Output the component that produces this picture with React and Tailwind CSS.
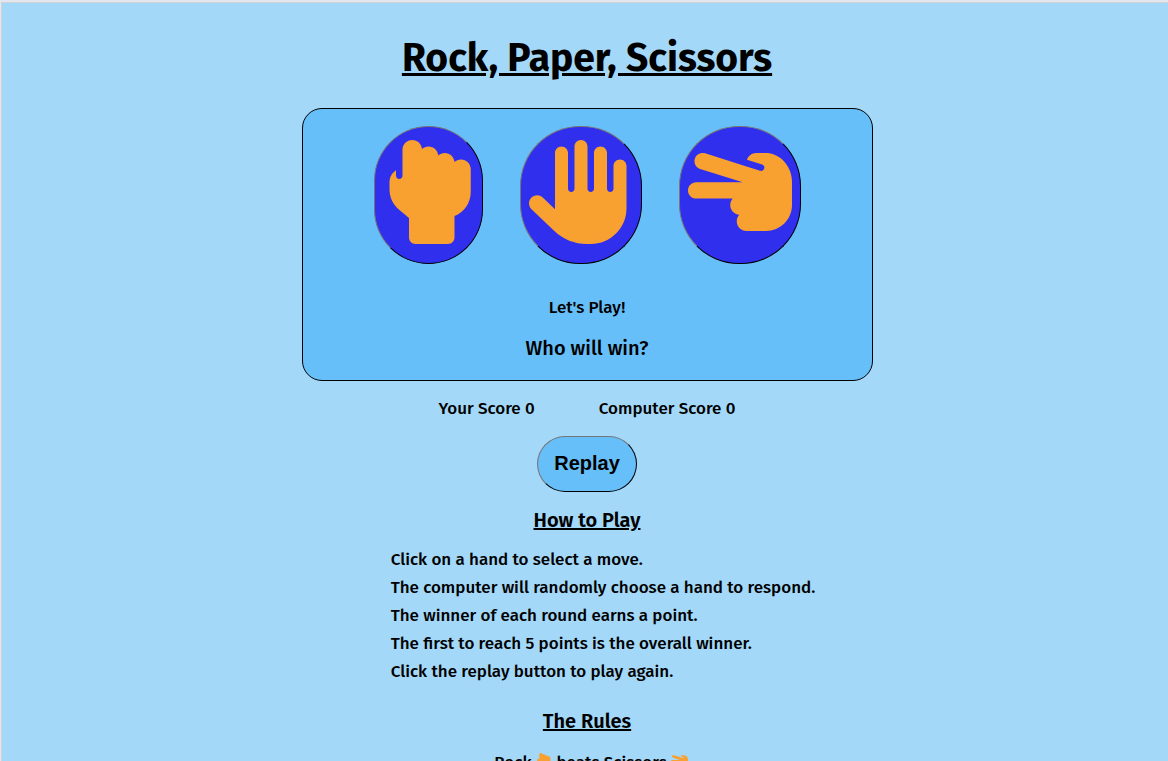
import { FaHandBackFist, FaHand, FaHandScissors } from "react-icons/fa6";

const moves = [
  { name: "Rock", Icon: FaHandBackFist, size: "w-[91px]" },
  { name: "Paper", Icon: FaHand, size: "w-[104px]" },
  { name: "Scissors", Icon: FaHandScissors, size: "w-[104px]" },
];

const steps = [
  "Click on a hand to select a move.",
  "The computer will randomly choose a hand to respond.",
  "The winner of each round earns a point.",
  "The first to reach 5 points is the overall winner.",
  "Click the replay button to play again.",
];

export default function App() {
  return (
    <div className="h-screen overflow-hidden border-t-2 border-l border-[#e3e6ec] bg-[#a3d8f8] font-['Fira_Sans','Noto_Sans',sans-serif] text-[17px] font-medium text-black">
      <main className="flex flex-col items-center border-t border-l border-[#ced2d9] pl-1">
        <h1 className="mt-7 text-[39px] leading-[54px] font-bold underline">Rock, Paper, Scissors</h1>

        <section className="mt-[23px] flex w-[571px] max-w-full flex-col items-center rounded-[20px] border border-black bg-[#67bff9] pt-[17px] pb-[18px]">
          <div className="flex gap-[37px]">
            {moves.map(({ name, Icon, size }) => (
              <button
                key={name}
                aria-label={name}
                className="rounded-[60px] border border-[#222222] bg-[#312fee] px-2 pt-[13px] pb-[19px] text-[#f9a130] [border-style:outset]"
              >
                <Icon className={`h-[104px] ${size}`} />
              </button>
            ))}
          </div>
          <p className="mt-8 leading-6">Let's Play!</p>
          <p className="mt-[14px] text-xl leading-7">Who will win?</p>
        </section>

        <div className="mt-4 flex gap-16 leading-6">
          <p>Your Score 0</p>
          <p>Computer Score 0</p>
        </div>

        <button className="mt-[15px] rounded-[28px] border border-[#222222] bg-[#67bff9] px-4 pt-3 pb-[14px] font-['Liberation_Sans',sans-serif] text-xl leading-7 font-bold [border-style:outset]">
          Replay
        </button>

        <h2 className="mt-4 text-xl leading-6 font-semibold underline">How to Play</h2>
        <ul className="mt-[14px] pl-8 leading-7">
          {steps.map((step) => (
            <li key={step}>{step}</li>
          ))}
        </ul>

        <h2 className="mt-[23px] text-xl leading-6 font-semibold underline">The Rules</h2>
        <p className="mt-4 flex items-center gap-1 pl-2 leading-7">
          Rock <FaHandBackFist className="mb-1 size-[17px] text-[#f9a130]" /> beats Scissors{" "}
          <FaHandScissors className="mb-1 size-[17px] text-[#f9a130]" />
        </p>
      </main>
    </div>
  );
}
